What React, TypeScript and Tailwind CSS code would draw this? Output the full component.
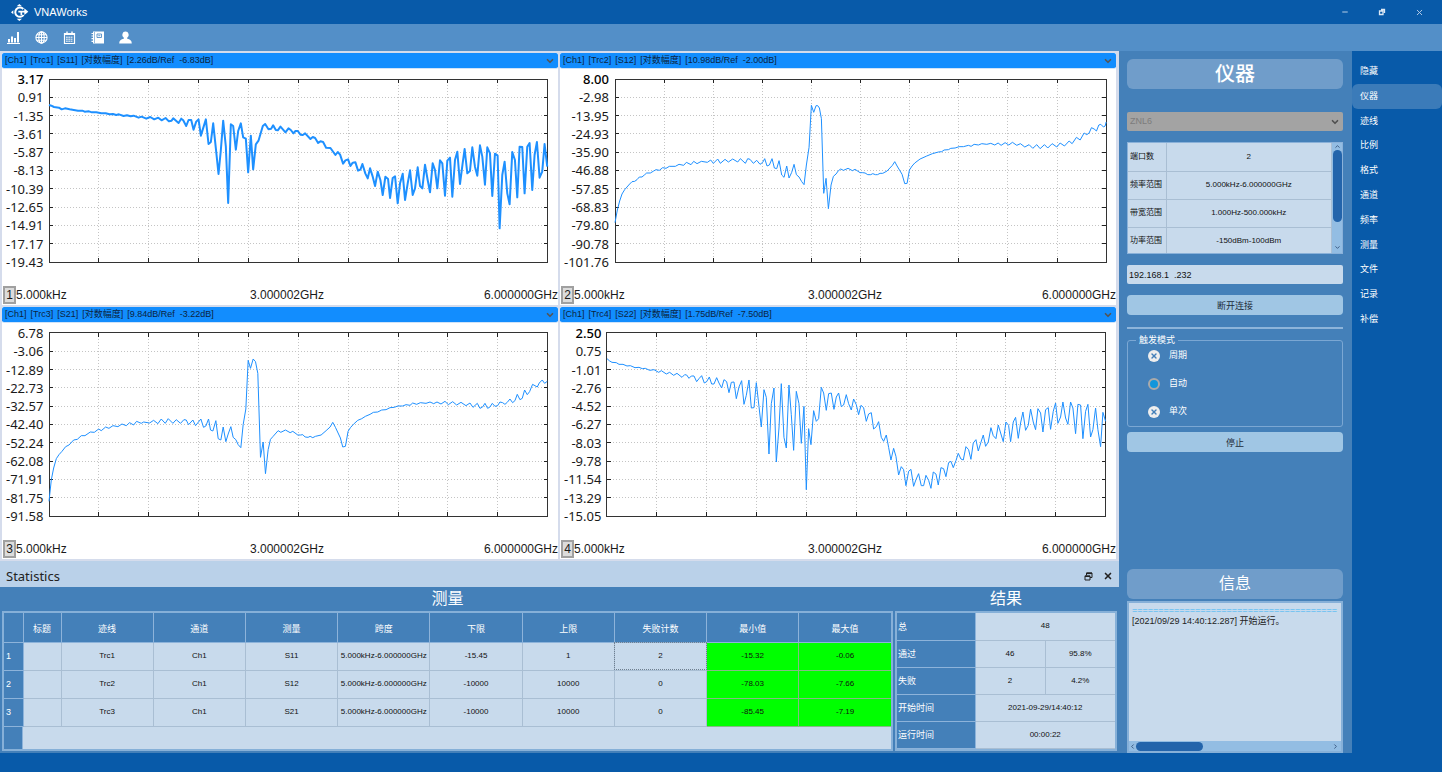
import { useState } from "react";
import { ChevronDown, ChevronLeft, ChevronRight, ChevronUp, Minus, X } from "lucide-react";

interface Segment {
  dx: number;
  points: string;
}

interface Trace {
  id: number;
  param: string;
  scale: string;
  labels: string[];
  boldTop?: boolean;
  thick?: boolean;
  // left, top and width of the plot in trace units (3 per pixel)
  origin: [number, number];
  width: number;
  segments: Segment[];
}

const PLOT_HEIGHT = 549;

const TRACES: Trace[] = [
  {
    id: 1,
    param: "S11",
    scale: "[2.26dB/Ref  -6.83dB]",
    labels: ["3.17", "0.91", "-1.35", "-3.61", "-5.87", "-8.13", "-10.39", "-12.65", "-14.91", "-17.17", "-19.43"],
    boldTop: true,
    thick: true,
    origin: [148, 87],
    width: 1497,
    segments: [
      {
        dx: 0,
        points:
          "148,165 155,167 163,171 178,173 186,178 196,175 210,178 235,182 248,182 255,185 268,184 277,187 290,187 305,190 318,190 330,193 340,192 350,195 358,193 372,198 382,196 393,199 402,197 417,203 426,200 440,206 452,201 464,208 476,203 486,211 498,204 508,214 516,212 521,205 537,219 545,206 551,211 560,228 567,210 575,210 582,239 590,215 597,208 604,257 619,208 627,282 634,276 641,220 649,295 657,372 664,300 671,212 679,290 686,459 694,223 701,228 709,299 716,243 724,220 731,262 739,266 746,367 754,257 761,358 769,283 777,272 790,228 797,222 807,238 815,236 821,226 829,240 835,241 843,230 858,247 867,235 874,240",
      },
      {
        dx: 870,
        points:
          "12,250 18,243 25,243 33,254 40,255 47,250 63,267 70,261 77,264 86,279 93,274 101,276 110,293 123,294 138,315 145,306 152,314 161,341 168,331 176,328 183,348 190,338 198,337 206,362 213,359 219,342 228,371 235,385 242,355 250,380 257,408 265,365 273,390 280,435 288,380 296,387 302,444 310,384 317,379 325,460 332,400 340,371 347,450 355,400 362,361 370,435 377,415 385,352 392,408 399,415 407,344 415,390 422,427 430,340 437,360 444,415 452,331 459,340 467,437 474,332 482,323 489,440 497,330 504,305 512,402 520,340 526,297 534,370 542,363 549,292 557,350 564,377 572,286 579,320 587,404 594,292 602,310 609,438 617,311 625,317 631,535 639,375 646,335 654,430 661,463 669,306 677,330 684,442 691,290 699,291 706,430 714,290 721,279 729,420 736,315 743,276 751,383 759,365 766,282 774,350",
      },
    ],
  },
  {
    id: 2,
    param: "S12",
    scale: "[10.98dB/Ref  -2.00dB]",
    labels: ["8.00", "-2.98", "-13.95", "-24.93", "-35.90", "-46.88", "-57.85", "-68.83", "-79.80", "-90.78", "-101.76"],
    boldTop: true,
    origin: [165, 87],
    width: 1473,
    segments: [
      {
        dx: 0,
        points:
          "165,518 172,480 179,453 186,432 194,419 201,411 209,402 216,395 224,394 231,389 238,381 246,381 253,375 260,369 271,369 281,363 288,359 298,361 308,353 318,355 328,349 346,349 357,343 371,346 379,337 393,344 401,334 411,341 424,334 442,337 452,330 460,340 473,327 481,340 495,328 505,336 518,327 533,336 541,326 556,340 563,326 570,328 580,340 590,331 600,343 608,337 614,326 621,348 628,345 636,326 643,354 650,356 657,332 665,375 672,382 680,348 687,384 695,367 702,343 709,374 717,381 725,395 732,404 739,345 747,292 754,166 761,187 768,167 773,167 778,174 784,206 791,430 798,385 805,476 813,405 820,379 828,372 835,362 842,357 850,361 864,355 877,362 885,358 900,368",
      },
      {
        dx: 840,
        points:
          "68,368 75,369 83,374 92,374 98,371 106,374 112,374 120,370 128,370 141,363 157,346 164,335 171,348 186,373 194,401 201,400 208,360 216,348 224,339 240,327 260,318 277,311 295,306 305,305 312,300 325,299 332,295 345,294 357,290 370,290 385,286 393,289 402,283 415,285 425,281 440,283 452,280 464,285 474,279 483,286 495,278 506,285 517,277 530,286 541,281 554,291 567,284 578,295 590,284 600,296 613,284 623,294 636,281 650,291 660,279 673,288 687,273 696,281 709,262 720,270 732,249 740,254 747,249 754,233 762,237 769,243 776,225 782,223 790,231 795,228 798,216",
      },
    ],
  },
  {
    id: 3,
    param: "S21",
    scale: "[9.84dB/Ref  -3.22dB]",
    labels: ["6.78", "-3.06", "-12.89", "-22.73", "-32.57", "-42.40", "-52.24", "-62.08", "-71.91", "-81.75", "-91.58"],
    origin: [148, 85],
    width: 1497,
    segments: [
      {
        dx: 0,
        points:
          "148,590 155,525 162,490 170,462 178,450 187,440 198,426 208,421 222,406 233,404 245,393 256,393 272,382 284,383 297,373 305,378 318,367 328,371 340,363 355,366 367,358 380,363 390,354 402,361 411,350 425,356 432,352 450,355 462,347 475,357 485,343 497,356 506,342 520,356 530,345 543,356 553,345 560,346 567,360 580,346 588,363 604,343 612,368 619,364 627,343 633,376 640,379 649,348 656,402 664,406 671,367 679,411 686,388 694,366 701,398 709,405 716,420 724,429 731,360 739,313 746,167 753,191 761,163 768,171 775,206 783,458 791,412 798,507 806,435 813,404 821,395 836,378 844,383 858,376 872,384 880,380 895,391 903,391",
      },
      {
        dx: 870,
        points:
          "40,390 47,397 56,398 62,395 70,399 78,395 95,391 110,378 122,367 130,353 138,368 153,400 160,427 168,425 176,380 183,369 192,359 205,347 217,342 228,335 242,329 252,323 265,322 277,316 290,315 302,309 315,308 325,304 340,304 350,300 362,302 370,295 382,299 393,294 410,296 422,292 433,297 443,292 455,298 467,290 477,300 490,291 502,301 515,293 530,303 542,295 551,308 564,296 572,311 580,307 587,296 595,311 602,307 609,296 617,305 625,303 632,292 640,294 647,299 654,293 662,283 670,294 677,288 684,269 692,285 699,281 706,256 714,270 721,261 730,239 744,247 750,235 759,226 766,236 774,230",
      },
    ],
  },
  {
    id: 4,
    param: "S22",
    scale: "[1.75dB/Ref  -7.50dB]",
    labels: ["2.50", "0.75", "-1.01", "-2.76", "-4.52", "-6.27", "-8.03", "-9.78", "-11.54", "-13.29", "-15.05"],
    boldTop: true,
    origin: [142, 85],
    width: 1496,
    segments: [
      {
        dx: 0,
        points:
          "142,162 150,169 157,173 170,174 178,179 190,179 202,184 212,183 226,189 238,188 248,192 257,191 270,197 283,195 297,203 305,198 320,208 330,203 342,212 352,206 367,218 375,210 381,211 388,221 395,214 403,214 411,231 418,222 426,213 434,235 441,231 449,217 456,238 463,238 471,219 478,235 486,250 493,225 501,231 508,264 515,233 523,232 530,282 538,247 546,228 553,299 560,272 568,226 575,310 583,309 590,234 598,305 605,367 613,255 620,278 628,448 635,297 643,250 650,472 658,370 665,237 673,398 680,430 688,241 695,330 702,437 710,260 718,297 725,416 733,305 740,555 747,372 754,420 762,318 770,350 777,342 785,248 792,265 800,317 807,267 815,265 823,314 830,277 837,265 845,306 852,301 860,270 867,297 875,316 882,283 890,300 897,330",
      },
      {
        dx: 840,
        points:
          "64,302 72,309 80,350 87,328 95,324 102,373 110,366 117,351 125,398 132,410 140,391 147,428 154,466 162,431 169,455 177,511 185,486 192,495 199,543 207,500 214,494 222,545 229,525 237,507 245,543 252,543 259,512 267,527 274,551 281,502 289,508 296,541 304,489 312,492 319,516 327,474 334,470 341,489 349,468 356,446 364,463 371,466 379,426 387,435 394,464 401,415 409,405 416,439 424,413 431,391 438,425 446,412 454,369 461,393 469,402 476,361 484,388 491,411 499,352 507,362 513,411 521,352 528,338 536,401 543,355 550,322 558,377 566,362 573,313 581,352 588,375 595,312 603,325 610,382 618,315 626,309 633,374 641,320 648,295 655,356 663,337 670,292 678,340 685,359 693,292 700,310 708,387 715,299 723,301 730,402 738,320 745,299 753,397 760,375 768,310 775,375 783,426 790,323 798,350",
      },
    ],
  },
];

const NAV = ["隐藏", "仪器", "迹线", "比例", "格式", "通道", "频率", "测量", "文件", "记录", "补偿"];

const INSTRUMENT_INFO = [
  ["端口数", "2"],
  ["频率范围", "5.000kHz-6.000000GHz"],
  ["带宽范围", "1.000Hz-500.000kHz"],
  ["功率范围", "-150dBm-100dBm"],
];

const MEASURE_HEAD = ["标题", "迹线", "通道", "测量", "跨度", "下限", "上限", "失败计数", "最小值", "最大值"];

const MEASURE_ROWS = [
  ["", "Trc1", "Ch1", "S11", "5.000kHz-6.000000GHz", "-15.45", "1", "2", "-15.32", "-0.06"],
  ["", "Trc2", "Ch1", "S12", "5.000kHz-6.000000GHz", "-10000", "10000", "0", "-78.03", "-7.66"],
  ["", "Trc3", "Ch1", "S21", "5.000kHz-6.000000GHz", "-10000", "10000", "0", "-85.45", "-7.19"],
];

const RESULT_ROWS = [
  ["总", "48"],
  ["通过", "46", "95.8%"],
  ["失败", "2", "4.2%"],
  ["开始时间", "2021-09-29/14:40:12"],
  ["运行时间", "00:00:22"],
];

const GRID_LINES = [1, 2, 3, 4, 5, 6, 7, 8, 9];

function Logo() {
  return (
    <svg width="18" height="17" viewBox="0 0 54 51" fill="#fff">
      <path d="M17 7 L25 0 L33 7 Z M17 44 L33 44 L25 51 Z M7 19 L7 31 L0 25 Z" />
      <path d="M37 15 A14 14 0 1 0 38 33" fill="none" stroke="#fff" strokeWidth="6" />
      <path d="M22 23 H44 M31 23 V34" fill="none" stroke="#fff" strokeWidth="5" />
      <path d="M40 13 L52 23 L40 33 Z" />
    </svg>
  );
}

function ToolIcon({ name }: { name: string }) {
  if (name === "chart") {
    return (
      <svg width="13" height="13" viewBox="0 0 13 13" fill="#fff">
        <path d="M0 12h13v1H0z M1 8h2v3.500H1z M4 5.500h2v6H4z M7 7h2v4.500H7z M10 1h2v10.500h-2z" />
      </svg>
    );
  }
  if (name === "globe") {
    return (
      <svg width="13" height="13" viewBox="0 0 13 13" fill="none" stroke="#fff" strokeWidth="1.100">
        <circle cx="6.500" cy="6.500" r="5.600" />
        <ellipse cx="6.500" cy="6.500" rx="2.700" ry="5.600" />
        <path d="M1 6.500h11 M6.500 1v11 M1.800 3.800h9.400 M1.800 9.200h9.400" />
      </svg>
    );
  }
  if (name === "calendar") {
    return (
      <svg width="13" height="13" viewBox="0 0 13 13" fill="none" stroke="#fff">
        <path d="M1.500 2.500h10v10h-10z M1.500 3.500h10" strokeWidth="1.200" />
        <path d="M4 0.500v3 M9 0.500v3" strokeWidth="1.400" />
        <path d="M3 6.200h7 M3 8.200h7 M3 10.200h7" strokeDasharray="1.800 0.500" />
      </svg>
    );
  }
  if (name === "book") {
    return (
      <svg width="13" height="13" viewBox="0 0 13 13">
        <path d="M2 0.500h11v12H2z" fill="#fff" />
        <path d="M6 3h4.500v3.500H6z" fill="none" stroke="#538fc8" strokeWidth="0.900" />
        <path d="M7.300 4.700h2" stroke="#538fc8" strokeWidth="0.900" />
        <path d="M3.500 1v11" stroke="#538fc8" strokeWidth="0.600" />
        <path d="M0.500 2.500h2.500 M0.500 5h2.500 M0.500 7.700h2.500 M0.500 10.300h2.500" stroke="#fff" strokeWidth="1.200" />
      </svg>
    );
  }
  return (
    <svg width="13" height="13" viewBox="0 0 13 13" fill="#fff">
      <path d="M6.500 0.500a3.200 3.400 0 0 1 1.700 6.300v1c2.800 0.500 4.600 1.800 4.600 4.700H0.200c0-2.900 1.800-4.200 4.600-4.700v-1A3.200 3.400 0 0 1 6.500 0.500z" />
    </svg>
  );
}

function Plot({ trace }: { trace: Trace }) {
  const [x, y] = trace.origin;
  const right = x + trace.width;
  const bottom = y + PLOT_HEIGHT;
  const stepX = trace.width / 10;
  const stepY = PLOT_HEIGHT / 10;

  return (
    <svg
      className="block h-full w-full overflow-visible"
      viewBox={`${x} ${y} ${trace.width} ${PLOT_HEIGHT}`}
      preserveAspectRatio="none"
      fill="none"
    >
      <g shapeRendering="crispEdges">
        {GRID_LINES.map((i) => (
          <g key={i}>
            <path
              d={`M${x + i * stepX} ${y}V${bottom} M${x} ${y + i * stepY}H${right}`}
              stroke="#c4c4c4"
              strokeDasharray="1 2"
              vectorEffect="non-scaling-stroke"
            />
            <path
              d={`M${x + i * stepX} ${y}v12 M${x + i * stepX} ${bottom}v-12 M${x} ${y + i * stepY}h12 M${right} ${y + i * stepY}h-12`}
              stroke="#222"
              vectorEffect="non-scaling-stroke"
            />
          </g>
        ))}
        <rect x={x} y={y} width={trace.width} height={PLOT_HEIGHT} stroke="#333" vectorEffect="non-scaling-stroke" />
      </g>
      <path
        d={
          "M" +
          trace.segments
            .flatMap((s) =>
              s.points.split(" ").map((p) => {
                const [px, py] = p.split(",").map(Number);
                return `${px + s.dx} ${py}`;
              })
            )
            .join("L")
        }
        stroke="#1e90ff"
        strokeWidth={trace.thick ? 2 : 1}
        strokeLinejoin="round"
        vectorEffect="non-scaling-stroke"
      />
    </svg>
  );
}

function ChartPanel({ trace }: { trace: Trace }) {
  return (
    <section className="flex min-h-0 min-w-0 flex-col bg-white">
      <header className="flex h-4 shrink-0 items-center gap-1 rounded-xs border-b border-[#cfe3f9] bg-[#128dfe] bg-clip-padding pr-[3px] pl-[3px] text-[9px] leading-none whitespace-pre text-[#0b2440]">
        <span>[Ch1]</span>
        <span>[Trc{trace.id}]</span>
        <span>[{trace.param}]</span>
        <span>[对数幅度]</span>
        <span>{trace.scale}</span>
        <button type="button" aria-label="展开" className="ml-auto">
          <ChevronDown size={10} strokeWidth={4} className="text-[#555555]" />
        </button>
      </header>
      <div className="mt-[10px] flex min-h-0 flex-1 gap-1.5 pr-[10px] pl-1">
        <ul className="-my-2 flex flex-col justify-between text-right font-['Noto_Sans'] text-[13px] leading-4 text-[#1a1a1a]">
          {trace.labels.map((label, i) => (
            <li key={label} className={i === 0 && trace.boldTop ? "font-medium text-black" : ""}>
              {label}
            </li>
          ))}
        </ul>
        <div className="min-h-0 min-w-0 flex-1">
          <Plot trace={trace} />
        </div>
      </div>
      <footer className="mt-6 mb-px flex h-[18px] shrink-0 items-center text-xs leading-none text-[#1a1a1a]">
        <span className="ml-px flex h-[18px] w-[13px] items-center justify-center border-2 border-[#a0a0a0] bg-[#dcdcdc]">
          {trace.id}
        </span>
        <div className="grid flex-1 grid-cols-3">
          <span>5.000kHz</span>
          <span className="text-center">3.000002GHz</span>
          <span className="text-right">6.000000GHz</span>
        </div>
      </footer>
    </section>
  );
}

function MeasureTable() {
  return (
    <div className="flex h-[140px] flex-col overflow-hidden border-2 border-[#86b0d8]">
      <table className="w-full table-fixed border-collapse text-center text-[8px] leading-none text-[#111]">
        <colgroup>
          <col className="w-[19px]" />
          <col className="w-[38px]" />
          <col span={9} />
        </colgroup>
        <thead>
          <tr className="h-[29px] bg-[#4480b9] text-[9px] text-white">
            <th className="border-r border-b border-[#8db3da]" />
            {MEASURE_HEAD.map((h) => (
              <th key={h} className="border-r border-b border-[#8db3da] pt-1 font-normal last:border-r-0">
                {h}
              </th>
            ))}
          </tr>
        </thead>
        <tbody>
          {MEASURE_ROWS.map((row, r) => (
            <tr key={r} className="h-7">
              <th className="border-r border-b border-[#8db3da] bg-[#4480b9] pl-0.5 text-left text-[9px] font-normal text-white">
                {r + 1}
              </th>
              {row.map((cell, c) => {
                if (c >= 8) {
                  return (
                    <td key={c} className="border-r border-b border-[#86b987] bg-[#00ff00] last:border-r-0">
                      {cell}
                    </td>
                  );
                }
                return (
                  <td
                    key={c}
                    className={
                      r === 0 && c === 7
                        ? "border-r border-b border-[#a9bed3] bg-[#c8daec] outline-1 -outline-offset-1 outline-[#6f7f90] outline-dotted"
                        : "border-r border-b border-[#a9bed3] bg-[#c8daec]"
                    }
                  >
                    {cell}
                  </td>
                );
              })}
            </tr>
          ))}
        </tbody>
      </table>
      <div className="flex flex-1">
        <div className="w-[19px] border-r border-[#8db3da] bg-[#4480b9]" />
        <div className="flex-1 bg-[#c8daec]" />
      </div>
    </div>
  );
}

function ResultTable() {
  return (
    <div className="h-[140px] overflow-hidden border-2 border-[#86b0d8] bg-[#c8daec]">
      <table className="w-full table-fixed border-collapse text-center text-[8px] leading-none text-[#111]">
        <colgroup>
          <col className="w-[78px]" />
          <col span={2} />
        </colgroup>
        <tbody>
          {RESULT_ROWS.map(([name, ...values]) => (
            <tr key={name} className="h-[27px]">
              <th className="border-r border-b border-[#8db3da] bg-[#4480b9] pt-0.5 pl-px text-left text-[9px] font-normal text-white">
                {name}
              </th>
              {values.map((v) => (
                <td
                  key={v}
                  colSpan={values.length === 1 ? 2 : 1}
                  className="border-r border-b border-[#a9bed3] last:border-r-0"
                >
                  {v}
                </td>
              ))}
            </tr>
          ))}
        </tbody>
      </table>
    </div>
  );
}

function Statistics() {
  return (
    <section className="shrink-0">
      <header className="flex h-[26px] items-center bg-[#bad1e9] pt-1 pr-1.5 pl-1.5 text-[#222]">
        <h2 className="font-['Noto_Sans'] text-[13px] leading-none">Statistics</h2>
        <button type="button" aria-label="浮动" className="ml-auto">
          <svg width="9" height="9" viewBox="0 0 9 9" fill="none" stroke="#222">
            <path d="M2.500 3.500V1h5.500v4.500H6" />
            <path d="M2.500 1.300h5.500" strokeWidth="1.600" />
            <path d="M1 3.800h5v4.200H1z M1 4.500h5" />
          </svg>
        </button>
        <button type="button" aria-label="关闭" className="ml-[10px]">
          <X size={10} strokeWidth={4} />
        </button>
      </header>
      <div className="flex gap-0.5 bg-[#4480b9] px-0.5 pb-0.5">
        <div className="min-w-0 flex-1">
          <h3 className="h-6 text-center text-base leading-6 text-white">测量</h3>
          <MeasureTable />
        </div>
        <div className="w-[222px]">
          <h3 className="h-6 text-center text-base leading-6 text-white">结果</h3>
          <ResultTable />
        </div>
      </div>
    </section>
  );
}

function TriggerMode() {
  const [mode, setMode] = useState("自动");

  return (
    <fieldset className="mt-[5px] flex flex-col gap-2 rounded-[3px] border border-[#7ba7d3] px-5 pb-1 text-[9px] text-white">
      <legend className="-ml-3 px-[3px] text-[9px] leading-3">触发模式</legend>
      {["周期", "自动", "单次"].map((m) => (
        <label key={m} className="relative flex h-5 items-center gap-[9px]">
          <input
            type="radio"
            name="trigger"
            checked={mode === m}
            onChange={() => setMode(m)}
            className="peer size-3 appearance-none rounded-full bg-[#eeeeee] checked:border-2 checked:border-[#aaaaaa] checked:bg-[#1296db]"
          />
          <X size={8} strokeWidth={4} className="pointer-events-none absolute left-0.5 text-[#4480b9] peer-checked:hidden" />
          {m}
        </label>
      ))}
    </fieldset>
  );
}

function InstrumentPanel() {
  return (
    <aside className="flex w-[233px] shrink-0 flex-col bg-[#4480b9] px-2 pr-[9px] pt-2">
      <h2 className="h-[30px] shrink-0 rounded-md bg-[#709dca] text-center text-xl leading-[30px] font-medium text-white">
        仪器
      </h2>

      <div className="relative mt-[23px]">
        <select
          disabled
          aria-label="仪器型号"
          className="block h-[19px] w-full appearance-none rounded-xs bg-[#a3a3a3] pl-[3px] text-[9px] text-[#7c7c7c] opacity-100"
        >
          <option>ZNL6</option>
        </select>
        <ChevronDown size={10} strokeWidth={4} className="pointer-events-none absolute top-[5px] right-[3px] text-[#505050]" />
      </div>

      <div className="mt-[11px] flex h-28 shrink-0 overflow-hidden border border-[#8ab1d9] bg-[#c8daec]">
        <table className="flex-1 table-fixed border-collapse text-[8px] leading-none text-[#111]">
          <tbody>
            {INSTRUMENT_INFO.map(([name, value]) => (
              <tr key={name} className="h-7">
                <th className="w-[38px] border-r border-b border-[#a9bed3] pl-0.5 text-left font-normal whitespace-nowrap">
                  {name}
                </th>
                <td className="border-r border-b border-[#a9bed3] text-center">{value}</td>
              </tr>
            ))}
          </tbody>
        </table>
        <div className="flex w-[10px] flex-col items-center bg-[#93bde3] text-[#33527a]">
          <ChevronUp size={7} strokeWidth={3} />
          <div className="h-[72px] w-[9px] rounded-full bg-[#2364ab]" />
          <ChevronDown size={7} strokeWidth={3} className="mt-auto mb-0.5" />
        </div>
      </div>

      <input
        type="text"
        aria-label="IP 地址"
        defaultValue={"192.168.1  .232"}
        className="mt-[11px] h-[19px] rounded-xs bg-[#c8daec] pl-0.5 text-[9px] whitespace-pre text-[#111]"
      />
      <button type="button" className="mt-[11px] h-5 rounded-sm bg-[#a0c6e4] pt-0.5 text-[9px] leading-none text-[#1c2b3a]">
        断开连接
      </button>
      <hr className="mt-3 border-t-2 border-[#8db4da]" />
      <TriggerMode />
      <button type="button" className="mt-[5px] h-5 rounded-sm bg-[#a0c6e4] pt-0.5 text-[9px] leading-none text-[#1c2b3a]">
        停止
      </button>

      <h2 className="mt-auto h-[30px] shrink-0 rounded-md bg-[#709dca] text-center text-base leading-[30px] text-white">
        信息
      </h2>
      <div className="mt-0.5 flex h-[152px] shrink-0 flex-col border-2 border-[#86b0d8] bg-[#c8daec] text-[9px] leading-[11px] text-[#222]">
        <p className="pt-0.5 pl-[3px] whitespace-nowrap text-[#3bb5f6]">=======================================</p>
        <p className="pl-[3px] whitespace-nowrap">[2021/09/29 14:40:12.287] 开始运行。</p>
        <div className="mt-auto flex h-[10px] items-center bg-[#93bde3] text-[#33527a]">
          <ChevronLeft size={7} strokeWidth={3} />
          <div className="h-[9px] w-[67px] rounded-full bg-[#2364ab]" />
          <ChevronRight size={7} strokeWidth={3} className="mr-0.5 ml-auto" />
        </div>
      </div>
    </aside>
  );
}

export default function App() {
  const [active, setActive] = useState("仪器");

  return (
    <div className="flex h-screen flex-col overflow-hidden bg-[#085aa9] font-['Liberation_Sans','Noto_Sans_CJK_SC',sans-serif]">
      <header className="flex h-6 shrink-0 items-center pl-[11px] text-white">
        <Logo />
        <h1 className="ml-[5px] text-[11px] leading-none">VNAWorks</h1>
        <div className="ml-auto flex gap-[29px] pr-[18px]">
          <button type="button" aria-label="最小化">
            <Minus size={8} strokeWidth={3} className="text-[#b5cde6]" />
          </button>
          <button type="button" aria-label="还原">
            <svg width="8" height="8" viewBox="0 0 8 8" fill="none" stroke="#dce8f4" strokeWidth="1.300">
              <path d="M1.500 3h3.500v3.500H1.500z M3 1.500h3.500v3.500" />
            </svg>
          </button>
          <button type="button" aria-label="关闭">
            <X size={9} strokeWidth={2.5} className="text-[#b5cde6]" />
          </button>
        </div>
      </header>

      <div className="flex h-[27px] shrink-0 items-center gap-[15px] bg-[#538fc8] pl-[7px]">
        {["chart", "globe", "calendar", "book", "user"].map((name) => (
          <button key={name} type="button" aria-label={name}>
            <ToolIcon name={name} />
          </button>
        ))}
      </div>

      <main className="flex min-h-0 flex-1">
        <div className="flex min-w-0 flex-1 flex-col">
          <div className="grid min-h-0 flex-1 grid-cols-2 grid-rows-2 gap-0.5 bg-[#d5dcec] py-0.5 pr-[3px] pl-0.5">
            {TRACES.map((t) => (
              <ChartPanel key={t.id} trace={t} />
            ))}
          </div>
          <Statistics />
        </div>

        <InstrumentPanel />

        <nav className="w-[90px] shrink-0 pt-2">
          <div className="flex h-[273px] flex-col">
            {NAV.map((item) => (
              <button
                key={item}
                type="button"
                onClick={() => setActive(item)}
                className={
                  item === active
                    ? "flex-1 rounded-md bg-[#3b7bb9] pl-2 text-left text-[9px] leading-none text-white"
                    : "flex-1 pl-2 text-left text-[9px] leading-none text-white"
                }
              >
                {item}
              </button>
            ))}
          </div>
        </nav>
      </main>

      <footer className="h-[19px] shrink-0" />
    </div>
  );
}
